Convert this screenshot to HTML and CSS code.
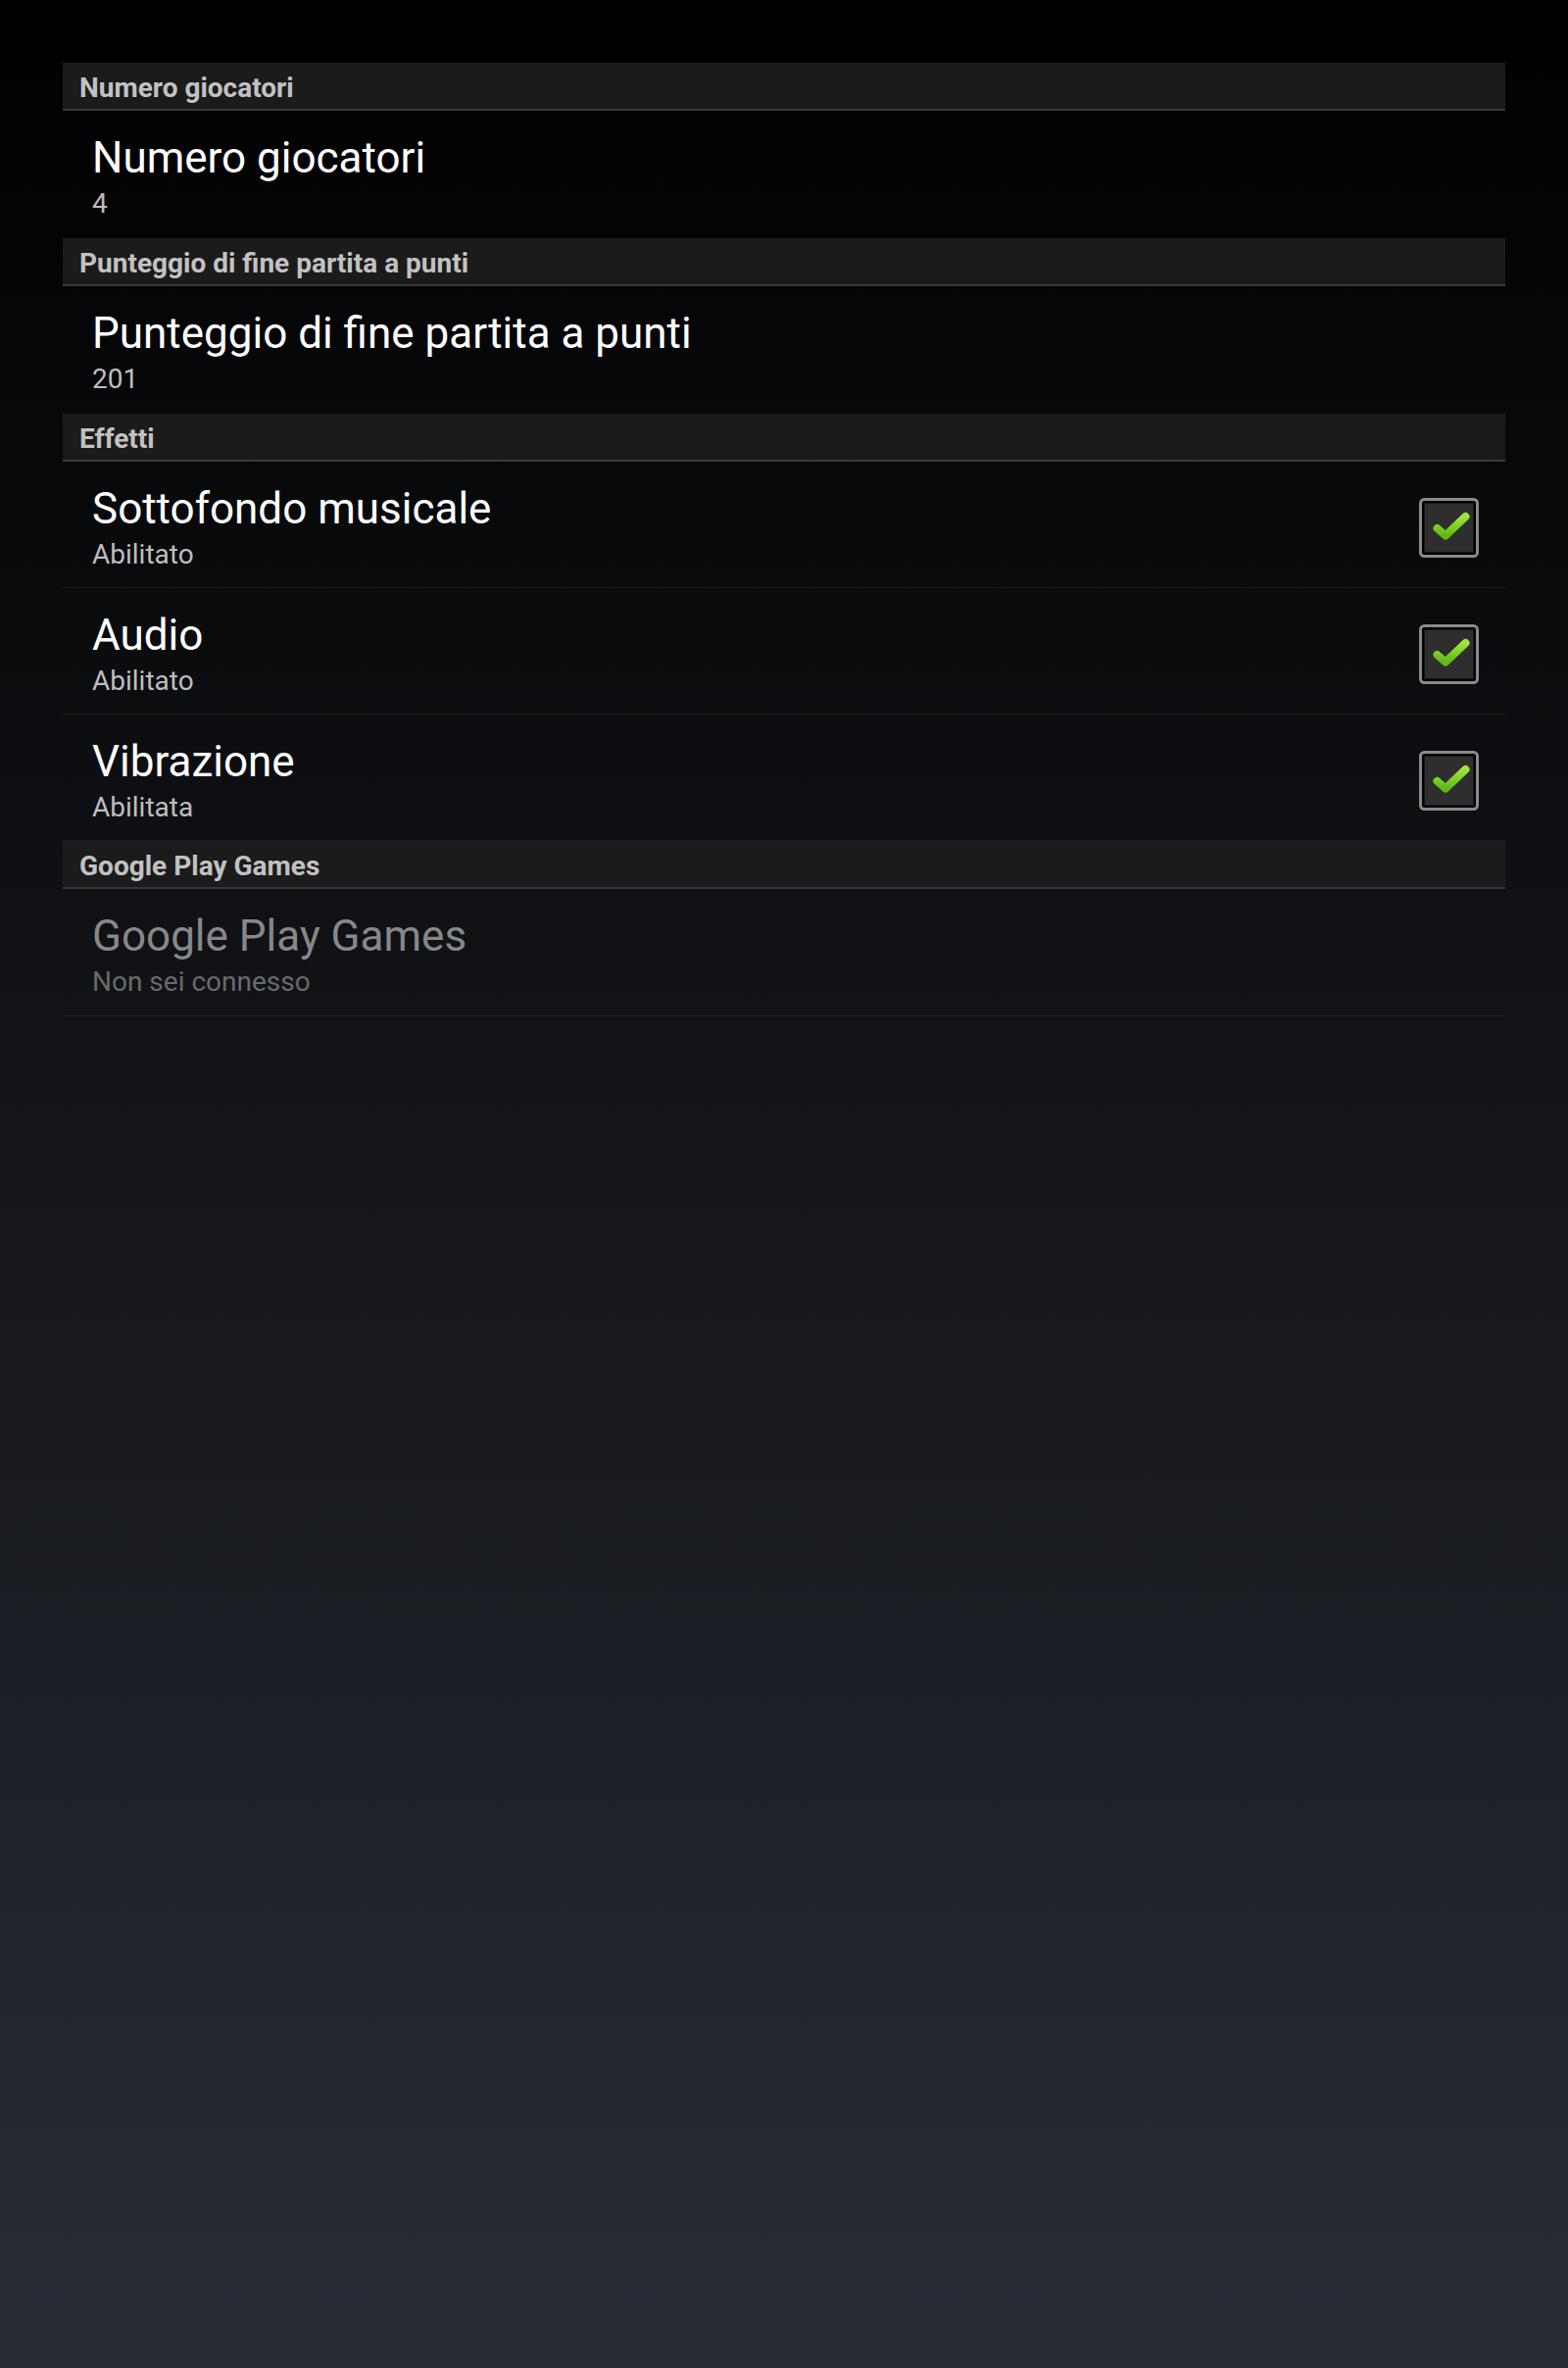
FILE: index.html
```html
<!DOCTYPE html>
<html lang="it">
<head>
    <meta charset="UTF-8">
    <meta name="viewport" content="width=device-width, initial-scale=1.0">
    <title>Impostazioni</title>
    <link rel="stylesheet" href="styles.css">
</head>
<body>
    <div class="screen">
        <div class="pref-list">
            <div class="category">Numero giocatori</div>
            <div class="pref">
                <div class="pref-text">
                    <div class="pref-title">Numero giocatori</div>
                    <div class="pref-summary">4</div>
                </div>
            </div>

            <div class="category">Punteggio di fine partita a punti</div>
            <div class="pref">
                <div class="pref-text">
                    <div class="pref-title">Punteggio di fine partita a punti</div>
                    <div class="pref-summary">201</div>
                </div>
            </div>

            <div class="category">Effetti</div>
            <div class="pref pref-check">
                <div class="pref-text">
                    <div class="pref-title">Sottofondo musicale</div>
                    <div class="pref-summary">Abilitato</div>
                </div>
                <svg class="checkbox" width="61" height="61" viewBox="0 0 61 61">
                    <defs>
                        <linearGradient id="tick" x1="0" y1="0" x2="0" y2="1">
                            <stop offset="0" stop-color="#a0e63c"/>
                            <stop offset="1" stop-color="#5fb814"/>
                        </linearGradient>
                    </defs>
                    <rect x="1.5" y="1.5" width="58" height="58" rx="4" fill="#000" stroke="#8a8a8a" stroke-width="3"/>
                    <rect x="5.5" y="5.5" width="50" height="50" fill="#2e2e2e"/>
                    <polyline points="18.5,31 27,38.5 47.5,19" fill="none" stroke="url(#tick)" stroke-width="8" stroke-linecap="round" stroke-linejoin="round"/>
                </svg>
            </div>
            <div class="pref pref-check">
                <div class="pref-text">
                    <div class="pref-title">Audio</div>
                    <div class="pref-summary">Abilitato</div>
                </div>
                <svg class="checkbox" width="61" height="61" viewBox="0 0 61 61">
                    <rect x="1.5" y="1.5" width="58" height="58" rx="4" fill="#000" stroke="#8a8a8a" stroke-width="3"/>
                    <rect x="5.5" y="5.5" width="50" height="50" fill="#2e2e2e"/>
                    <polyline points="18.5,31 27,38.5 47.5,19" fill="none" stroke="url(#tick)" stroke-width="8" stroke-linecap="round" stroke-linejoin="round"/>
                </svg>
            </div>
            <div class="pref pref-check">
                <div class="pref-text">
                    <div class="pref-title">Vibrazione</div>
                    <div class="pref-summary">Abilitata</div>
                </div>
                <svg class="checkbox" width="61" height="61" viewBox="0 0 61 61">
                    <rect x="1.5" y="1.5" width="58" height="58" rx="4" fill="#000" stroke="#8a8a8a" stroke-width="3"/>
                    <rect x="5.5" y="5.5" width="50" height="50" fill="#2e2e2e"/>
                    <polyline points="18.5,31 27,38.5 47.5,19" fill="none" stroke="url(#tick)" stroke-width="8" stroke-linecap="round" stroke-linejoin="round"/>
                </svg>
            </div>

            <div class="category">Google Play Games</div>
            <div class="pref pref-disabled">
                <div class="pref-text">
                    <div class="pref-title">Google Play Games</div>
                    <div class="pref-summary">Non sei connesso</div>
                </div>
            </div>
        </div>
    </div>
</body>
</html>
```

FILE: styles.css
```css
html, body {
    margin: 0;
    padding: 0;
}

body {
    font-family: Roboto, "Noto Sans", Arial, sans-serif;
    color: #ffffff;
}

.screen {
    min-height: 100vh;
    box-sizing: border-box;
    padding: 64px 64px 0 64px;
    background: linear-gradient(to bottom, #000000 0%, #282c35 100%);
}

.category {
    background-color: #1b1b1b;
    border-bottom: 2px solid #383838;
    color: #c2c2c2;
    font-size: 28px;
    font-weight: bold;
    line-height: 43px;
    padding: 4px 0 0 17px;
}

.pref {
    display: flex;
    align-items: center;
    padding: 22px 0 18px 30px;
}

.pref-text {
    flex: 1;
}

.pref-title {
    font-size: 44px;
    line-height: 52px;
    color: #ffffff;
}

.pref-summary {
    font-size: 28px;
    line-height: 34px;
    margin-top: 4px;
    color: #bebebe;
}

.pref-check {
    padding-bottom: 16px;
    border-bottom: 1px solid rgba(255, 255, 255, 0.07);
}

.checkbox {
    margin: 0 27px 0 0;
    flex-shrink: 0;
}

.pref-disabled {
    padding-bottom: 17px;
    border-bottom: 1px solid rgba(255, 255, 255, 0.075);
}

.pref-disabled .pref-title {
    color: #878889;
}

.pref-disabled .pref-summary {
    color: #696a6c;
}
```
